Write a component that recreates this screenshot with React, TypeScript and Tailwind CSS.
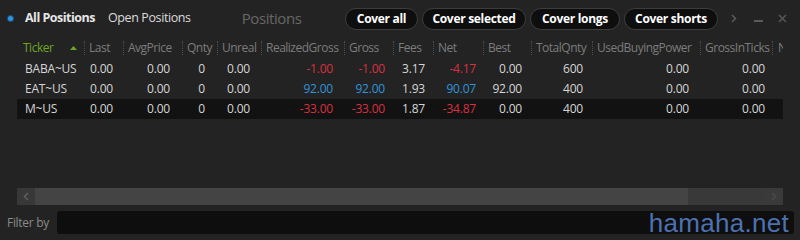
import React from "react";

type Col = {
    key: string;
    label: string;
    w: number;
    pr: number;
};

const COLS: Col[] = [
    { key: "ticker", label: "Ticker", w: 67, pr: 0 },
    { key: "last", label: "Last", w: 39, pr: 10 },
    { key: "avg", label: "AvgPrice", w: 59, pr: 12 },
    { key: "qnty", label: "Qnty", w: 35, pr: 12 },
    { key: "unreal", label: "Unreal", w: 44, pr: 11 },
    { key: "rg", label: "RealizedGross", w: 83, pr: 11 },
    { key: "gross", label: "Gross", w: 49, pr: 8 },
    { key: "fees", label: "Fees", w: 40, pr: 8 },
    { key: "net", label: "Net", w: 50, pr: 7 },
    { key: "best", label: "Best", w: 48, pr: 9 },
    { key: "tq", label: "TotalQnty", w: 61, pr: 9 },
    { key: "ubp", label: "UsedBuyingPower", w: 108, pr: 11 },
    { key: "git", label: "GrossInTicks", w: 72, pr: 7 },
];

type Row = Record<string, string>;

const ROWS: Row[] = [
    { ticker: "BABA~US", last: "0.00", avg: "0.00", qnty: "0", unreal: "0.00", rg: "-1.00", gross: "-1.00", fees: "3.17", net: "-4.17", best: "0.00", tq: "600", ubp: "0.00", git: "0.00" },
    { ticker: "EAT~US", last: "0.00", avg: "0.00", qnty: "0", unreal: "0.00", rg: "92.00", gross: "92.00", fees: "1.93", net: "90.07", best: "92.00", tq: "400", ubp: "0.00", git: "0.00" },
    { ticker: "M~US", last: "0.00", avg: "0.00", qnty: "0", unreal: "0.00", rg: "-33.00", gross: "-33.00", fees: "1.87", net: "-34.87", best: "0.00", tq: "400", ubp: "0.00", git: "0.00" },
];

const COLORED = ["rg", "gross", "net"];

function valueColor(key: string, v: string) {
    if (!COLORED.includes(key)) return "text-[#d6d6d6]";
    return v.startsWith("-") ? "text-[#d9303f]" : "text-[#2f95da]";
}

function Sep() {
    return <span className="h-[14px] border-l border-dotted border-[#4e4e4e]" />;
}

export default function App() {
    return (
        <div
            className="relative w-[800px] h-[240px] overflow-hidden bg-[#232323] flex flex-col text-[12px]"
            style={{ fontFamily: '"Open Sans", "Noto Sans", sans-serif' }}
        >
            {/* title bar */}
            <div className="h-[37px] flex items-center pl-[8px] pr-[13px]">
                <span className="w-[5px] h-[5px] rounded-full bg-[#2e94dc] ring-1 ring-[#1b4f78]" />
                <span className="ml-[12px] text-[12.5px] font-bold text-[#e6e6e6] tracking-[-0.5px]">All Positions</span>
                <span className="ml-[13px] text-[12.5px] text-[#dcdcdc] tracking-[-0.4px]">Open Positions</span>
                <span className="ml-[51px] text-[15px] text-[#676767] tracking-[-0.4px]">Positions</span>
                <div className="ml-auto flex items-center gap-[4px]">
                    {[
                        ["Cover all", "w-[73px]"],
                        ["Cover selected", "w-[104px]"],
                        ["Cover longs", "w-[90px]"],
                        ["Cover shorts", "w-[94px]"],
                    ].map(([t, w]) => (
                        <button
                            key={t}
                            className={`${w} h-[22px] rounded-full bg-[#0e0e0e] border border-[#3d3d3d] text-[12px] font-bold text-white tracking-[-0.3px] flex items-center justify-center`}
                        >
                            {t}
                        </button>
                    ))}
                </div>
                <svg width="6" height="9" viewBox="0 0 6 9" className="ml-[13px]">
                    <path d="M1 1 L4.5 4.5 L1 8" stroke="#585858" strokeWidth="1.6" fill="none" />
                </svg>
                <svg width="9" height="3" viewBox="0 0 9 3" className="ml-[17px] mt-[5px]">
                    <rect x="0" y="0" width="9" height="2" fill="#5a5a5a" />
                </svg>
                <svg width="9" height="9" viewBox="0 0 9 9" className="ml-[15px]">
                    <path d="M1 1 L8 8 M8 1 L1 8" stroke="#555" strokeWidth="1.6" />
                </svg>
            </div>

            {/* table */}
            <div className="mx-[17px] overflow-hidden">
                <div className="h-[22px] flex items-center whitespace-nowrap text-[#7c7c7c] tracking-[-0.5px]">
                    {COLS.map((c, i) => (
                        <div key={c.key} className="shrink-0 flex items-center" style={{ width: c.w }}>
                            {i > 0 && <Sep />}
                            {i === 0 ? (
                                <>
                                    <span className="ml-[6px] text-[#6fa524]">{c.label}</span>
                                    <svg width="7" height="4" viewBox="0 0 7 4" className="ml-[17px]">
                                        <path d="M0 4 L3.5 0 L7 4 Z" fill="#6fa524" />
                                    </svg>
                                </>
                            ) : (
                                <span className="ml-[4px]">{c.label}</span>
                            )}
                        </div>
                    ))}
                    <div className="shrink-0 flex items-center">
                        <Sep />
                        <span className="ml-[5px]">N</span>
                    </div>
                </div>
                {ROWS.map((r, ri) => (
                    <div
                        key={r.ticker}
                        className={`h-[20px] flex items-center whitespace-nowrap tracking-[-0.2px] ${ri === 2 ? "bg-[#121212]" : ""}`}
                    >
                        {COLS.map((c, i) => (
                            <div
                                key={c.key}
                                className={`shrink-0 ${i === 0 ? "pl-[8px] text-[#d6d6d6]" : "text-right"} ${valueColor(c.key, r[c.key])}`}
                                style={{ width: c.w, paddingRight: c.pr }}
                            >
                                {r[c.key]}
                            </div>
                        ))}
                    </div>
                ))}
            </div>

            <div className="flex-1" />

            {/* horizontal scrollbar */}
            <div className="mx-[17px] h-[17px] flex bg-[#3a3a3a]">
                <div className="w-[18px] h-full bg-[#383838] flex items-center justify-center">
                    <svg width="6" height="9" viewBox="0 0 6 9">
                        <path d="M5 1 L1.5 4.5 L5 8" stroke="#5c5c5c" strokeWidth="1.6" fill="none" />
                    </svg>
                </div>
                <div className="w-[653px] h-full bg-[#444444]" />
                <div className="flex-1 h-full bg-[#393939]" />
                <div className="w-[18px] h-full bg-[#3a3a3a] flex items-center justify-center">
                    <svg width="6" height="9" viewBox="0 0 6 9">
                        <path d="M1 1 L4.5 4.5 L1 8" stroke="#4a4a4a" strokeWidth="1.6" fill="none" />
                    </svg>
                </div>
            </div>

            {/* filter */}
            <div className="h-[35px] flex items-center pl-[7px]">
                <span className="text-[#8a8a8a] tracking-[-0.3px]">Filter by</span>
                <div className="ml-[8px] w-[737px] h-[23px] rounded-[3px] bg-[#0e0e0e]" />
            </div>

            <div
                className="absolute right-[11px] bottom-[-3px] text-[26px] text-[#4d71b0] tracking-[0.3px]"
                style={{ fontFamily: '"Liberation Sans", Arial, sans-serif' }}
            >
                hamaha.net
            </div>
        </div>
    );
}
